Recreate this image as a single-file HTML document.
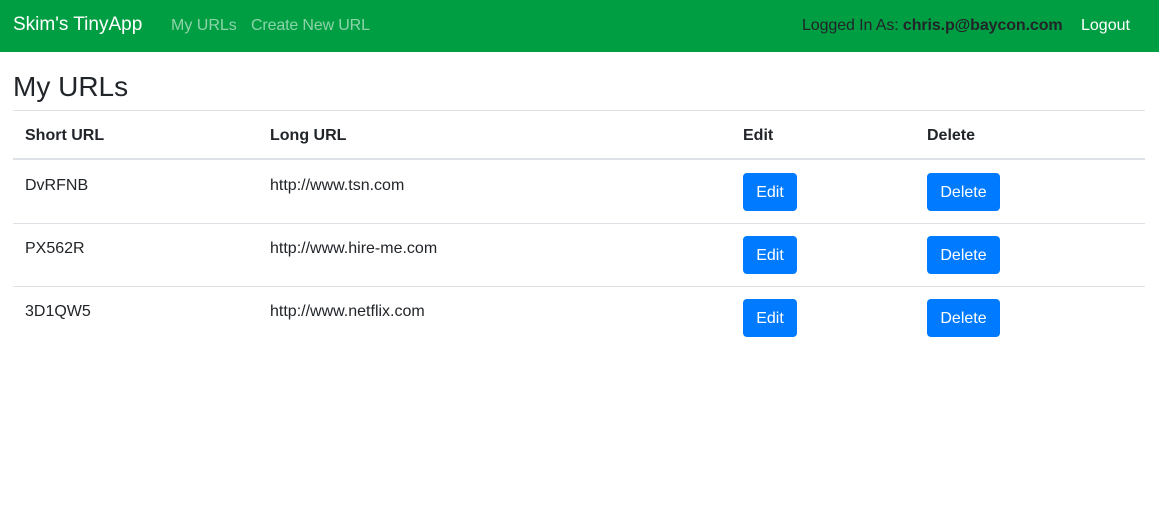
<!DOCTYPE html>
<html><head><style>
*{box-sizing:border-box}
body{margin:0;font-family:"Liberation Sans",Arial,sans-serif;color:#212529;font-size:16px;background:#fff}
.nav{height:52px;background:#009e42;position:relative;color:#fff}
.nav span{position:absolute;top:16px;line-height:20px}
.brand{left:13px;font-size:19px;top:15px!important}
.l{color:rgba(255,255,255,.55)}
h2{position:absolute;left:13px;top:71px;margin:0;font-size:28px;font-weight:400;line-height:32px}
.hr{position:absolute;left:13px;width:1132px;top:110px;height:1px;background:#dee2e6}
.cell{position:absolute;line-height:20px}
.th{font-weight:bold;top:126px}
.line{position:absolute;left:13px;width:1132px;height:1px;background:#dee2e6}
.btn{position:absolute;height:38px;background:#007bff;color:#fff;border-radius:4px;line-height:40px;text-align:center}
</style></head><body>
<div class="nav">
<span class="brand">Skim's TinyApp</span>
<span class="l" style="left:171px">My URLs</span>
<span class="l" style="left:251px;letter-spacing:-0.15px">Create New URL</span>
<span style="left:802px;color:#212529;letter-spacing:-0.1px">Logged In As: <b>chris.p@baycon.com</b></span>
<span style="left:1081px">Logout</span>
</div>
<h2>My URLs</h2>
<div class="hr"></div>
<div class="cell th" style="left:25px">Short URL</div>
<div class="cell th" style="left:270px">Long URL</div>
<div class="cell th" style="left:743px">Edit</div>
<div class="cell th" style="left:927px">Delete</div>
<div class="line" style="top:158px;height:2px"></div>

<div class="cell" style="left:25px;top:176px">DvRFNB</div>
<div class="cell" style="left:270px;top:176px">http://www.tsn.com</div>
<div class="btn" style="left:743px;top:173px;width:54px">Edit</div>
<div class="btn" style="left:927px;top:173px;width:73px">Delete</div>
<div class="line" style="top:223px"></div>

<div class="cell" style="left:25px;top:239px">PX562R</div>
<div class="cell" style="left:270px;top:239px">http://www.hire-me.com</div>
<div class="btn" style="left:743px;top:236px;width:54px">Edit</div>
<div class="btn" style="left:927px;top:236px;width:73px">Delete</div>
<div class="line" style="top:286px"></div>

<div class="cell" style="left:25px;top:302px">3D1QW5</div>
<div class="cell" style="left:270px;top:302px">http://www.netflix.com</div>
<div class="btn" style="left:743px;top:299px;width:54px">Edit</div>
<div class="btn" style="left:927px;top:299px;width:73px">Delete</div>
</body></html>
